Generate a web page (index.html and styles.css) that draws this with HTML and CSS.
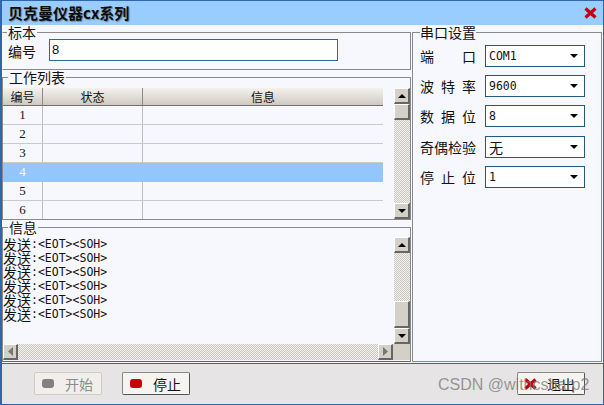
FILE: index.html
```html
<!DOCTYPE html>
<html lang="zh">
<head>
<meta charset="utf-8">
<title>贝克曼仪器cx系列</title>
<link rel="stylesheet" href="styles.css">
</head>
<body>
<div class="window">
  <header class="titlebar">
    <span class="title">贝克曼仪器cx系列</span>
    <svg class="close" width="13" height="12" viewBox="0 0 13 12"><path d="M1.5 1.5 L11.5 10.5 M11.5 1.5 L1.5 10.5" stroke="#c4000c" stroke-width="3.2" fill="none"/></svg>
  </header>
  <main class="main">
    <div class="left">
      <fieldset class="group sample">
        <legend>标本</legend>
        <div class="sample-row">
          <label class="sample-label">编号</label>
          <div class="textbox">8</div>
        </div>
      </fieldset>
      <fieldset class="group worklist">
        <legend>工作列表</legend>
        <div class="list-row">
          <table class="grid">
            <colgroup><col class="c1"><col class="c2"><col class="c3"></colgroup>
            <thead><tr><th>编号</th><th>状态</th><th>信息</th></tr></thead>
            <tbody>
              <tr><td>1</td><td></td><td></td></tr>
              <tr><td>2</td><td></td><td></td></tr>
              <tr><td>3</td><td></td><td></td></tr>
              <tr class="selected"><td>4</td><td></td><td></td></tr>
              <tr><td>5</td><td></td><td></td></tr>
              <tr><td>6</td><td></td><td></td></tr>
            </tbody>
          </table>
          <div class="vscroll list-scroll">
            <div class="sbtn"><svg width="8" height="4" viewBox="0 0 8 4"><path d="M4 0 L8 4 L0 4 Z"/></svg></div>
            <div class="thumb thumb-list"></div>
            <div class="track"></div>
            <div class="sbtn"><svg width="8" height="4" viewBox="0 0 8 4"><path d="M0 0 L8 0 L4 4 Z"/></svg></div>
          </div>
        </div>
      </fieldset>
      <fieldset class="group info">
        <legend>信息</legend>
        <div class="info-body">
          <div class="log">
            <div class="log-line"><span class="cn">发送</span><span class="mono">:&lt;EOT&gt;&lt;SOH&gt;</span></div>
            <div class="log-line"><span class="cn">发送</span><span class="mono">:&lt;EOT&gt;&lt;SOH&gt;</span></div>
            <div class="log-line"><span class="cn">发送</span><span class="mono">:&lt;EOT&gt;&lt;SOH&gt;</span></div>
            <div class="log-line"><span class="cn">发送</span><span class="mono">:&lt;EOT&gt;&lt;SOH&gt;</span></div>
            <div class="log-line"><span class="cn">发送</span><span class="mono">:&lt;EOT&gt;&lt;SOH&gt;</span></div>
            <div class="log-line"><span class="cn">发送</span><span class="mono">:&lt;EOT&gt;&lt;SOH&gt;</span></div>
          </div>
          <div class="vscroll info-scroll">
            <div class="sbtn"><svg width="8" height="4" viewBox="0 0 8 4"><path d="M4 0 L8 4 L0 4 Z"/></svg></div>
            <div class="track"></div>
            <div class="thumb thumb-info"></div>
            <div class="sbtn"><svg width="8" height="4" viewBox="0 0 8 4"><path d="M0 0 L8 0 L4 4 Z"/></svg></div>
          </div>
        </div>
        <div class="hscroll">
          <div class="sbtn hbtn"><svg width="5" height="9" viewBox="0 0 5 9"><path d="M5 0 L5 9 L0 4.5 Z" fill="#777"/></svg></div>
          <div class="track"></div>
          <div class="sbtn hbtn"><svg width="5" height="9" viewBox="0 0 5 9"><path d="M0 0 L0 9 L5 4.5 Z" fill="#777"/></svg></div>
          <div class="corner"></div>
        </div>
      </fieldset>
    </div>
    <fieldset class="group serial">
      <legend>串口设置</legend>
      <div class="fields">
        <div class="field"><span class="field-label">端口</span><div class="combo mono-text">COM1<svg width="8" height="4" viewBox="0 0 8 4"><path d="M0 0 L8 0 L4 4 Z"/></svg></div></div>
        <div class="field"><span class="field-label">波特率</span><div class="combo mono-text">9600<svg width="8" height="4" viewBox="0 0 8 4"><path d="M0 0 L8 0 L4 4 Z"/></svg></div></div>
        <div class="field"><span class="field-label">数据位</span><div class="combo mono-text">8<svg width="8" height="4" viewBox="0 0 8 4"><path d="M0 0 L8 0 L4 4 Z"/></svg></div></div>
        <div class="field field-shift"><span class="field-label">奇偶检验</span><div class="combo">无<svg width="8" height="4" viewBox="0 0 8 4"><path d="M0 0 L8 0 L4 4 Z"/></svg></div></div>
        <div class="field"><span class="field-label">停止位</span><div class="combo mono-text">1<svg width="8" height="4" viewBox="0 0 8 4"><path d="M0 0 L8 0 L4 4 Z"/></svg></div></div>
      </div>
    </fieldset>
  </main>
  <footer class="footer">
    <div class="btn btn-start is-disabled"><span class="led led-grey"></span>开始</div>
    <div class="btn btn-stop"><span class="led led-red"></span>停止</div>
    <div class="btn btn-exit"><svg class="exit-x" width="13" height="12" viewBox="0 0 13 12"><path d="M1.5 1.5 L11.5 10.5 M11.5 1.5 L1.5 10.5" stroke="#c4000c" stroke-width="3.2" fill="none"/></svg>退出</div>
    <span class="watermark">CSDN @withcsharp2</span>
  </footer>
</div>
</body>
</html>
```
FILE: styles.css
```css
* { box-sizing: border-box; }
html, body { margin: 0; padding: 0; }
body {
  width: 604px;
  height: 405px;
  overflow: hidden;
  font-family: "Noto Sans CJK SC", "Noto Sans", sans-serif;
  font-size: 14px;
  color: #111;
}
.window {
  width: 604px;
  height: 405px;
  display: flex;
  flex-direction: column;
  background: #f7f8fe;
  border-left: 2px solid #2f66ac;
  border-right: 1px solid #2f66ac;
  border-top: 1px solid #2f66ac;
  border-bottom: 1px solid #2f66ac;
  position: relative;
}
.titlebar {
  height: 24px;
  flex: none;
  background: #99ccff;
  display: flex;
  align-items: center;
  justify-content: space-between;
  padding: 0 6px;
}
.title {
  font-size: 15px;
  line-height: 20px;
  font-weight: 700;
  color: #0c0c0c;
  text-shadow: 1px 1px 1px #6d7f92;
}
.close { display: block; margin-top: -1px; }
.main {
  flex: none;
  height: 337px;
  display: flex;
  gap: 1px;
}
.left { width: 409px; flex: none; display: flex; flex-direction: column; }
.group {
  margin: 0;
  padding: 0;
  min-width: 0;
  border: 1px solid #8a8a8a;
}
.group legend {
  margin-left: 5px;
  padding: 0 1px;
  font-size: 14px;
  line-height: 14px;
  height: 14px;
}
.sample { height: 45px; border-left-color: transparent; }
.sample legend { margin-left: 4px; }
.sample-row { display: flex; align-items: flex-start; }
.sample-label { margin: 4px 0 0 5px; width: 41px; line-height: 16px; }
.textbox {
  width: 289px;
  height: 22px;
  background: #fff;
  border: 1px solid #2a6a96;
  padding-left: 2px;
  line-height: 20px;
  font-family: "Liberation Sans", sans-serif;
  font-size: 13px;
}
.worklist { height: 150px; }
.list-row { display: flex; justify-content: space-between; padding-top: 4px; }
.grid {
  width: 380px;
  table-layout: fixed;
  border-collapse: separate;
  border-spacing: 0;
  font-size: 12px;
}
.c1 { width: 40px; }
.c2 { width: 100px; }
.c3 { width: 240px; }
.grid th {
  height: 18px;
  padding: 0;
  font-weight: 400;
  line-height: 14px;
  background: linear-gradient(#f4f2ee, #cfc9c2);
  border-bottom: 1px solid #6e6e6e;
  border-right: 1px solid #8a8a8a;
}
.grid th:last-child { border-right: none; }
.grid td {
  height: 19px;
  padding: 0;
  text-align: center;
  line-height: 14px;
  border-bottom: 1px solid #cacaca;
  border-right: 1px solid #bdbdbd;
  font-family: "Liberation Serif", serif;
  font-size: 13px;
}
.grid td:last-child { border-right: none; }
.grid tbody tr:last-child td { height: 18px; border-bottom: none; }
.grid .selected td {
  background: #94c6fb;
  border-color: #94c6fb;
  color: #fff;
}
.vscroll { width: 16px; flex: none; display: flex; flex-direction: column; }
.list-scroll { height: 131px; }
.info-scroll { height: 107px; margin-top: 3px; }
.sbtn {
  flex: none;
  height: 16px;
  background: #d4d0c8;
  border-top: 1px solid #fff;
  border-left: 1px solid #fff;
  border-right: 2px solid #666;
  border-bottom: 2px solid #666;
  display: flex;
  align-items: center;
  justify-content: center;
}
.sbtn svg { display: block; }
.thumb {
  flex: none;
  background: #d4d0c8;
  border-top: 1px solid #fff;
  border-left: 1px solid #fff;
  border-right: 2px solid #666;
  border-bottom: 2px solid #666;
}
.thumb-list { height: 16px; }
.thumb-info { height: 27px; }
.track {
  flex: 1;
  background: repeating-conic-gradient(#c9c6bf 0 25%, #f4f3f0 0 50%) 0 0 / 2px 2px;
}
.info { height: 142px; border-bottom-color: #4f6a80; }
.info-body { display: flex; justify-content: space-between; height: 110px; }
.log { padding-top: 3px; white-space: nowrap; }
.log-line { height: 14px; display: flex; align-items: center; }
.cn { font-size: 14px; line-height: 14px; }
.mono { font-family: "DejaVu Sans Mono", monospace; font-size: 11.5px; line-height: 14px; }
.hscroll { display: flex; height: 16px; }
.hbtn { width: 15px; }
.corner { width: 17px; flex: none; background: #d4d0c8; }
.serial { width: 190px; height: 337px; flex: none; border-color: #8a8a8a; }
.serial legend { margin-left: 7px; padding: 0; }
.fields { display: flex; flex-direction: column; gap: 8px; padding: 6px 0 0 7px; }
.field { display: flex; align-items: center; height: 22px; gap: 9px; }
.field-shift { margin-top: 1px; }
.field-label {
  width: 56px;
  flex: none;
  white-space: nowrap;
  text-align: justify;
  text-align-last: justify;
  line-height: 16px;
}
.combo {
  width: 100px;
  height: 22px;
  background: #fff;
  border: 1px solid #24597f;
  display: flex;
  align-items: center;
  justify-content: space-between;
  padding: 0 6px 0 3px;
  line-height: 20px;
}
.mono-text { font-family: "DejaVu Sans Mono", monospace; font-size: 11.5px; }
.footer {
  flex: 1;
  display: flex;
  align-items: flex-start;
  margin-top: 1px;
  padding-top: 8px;
  padding-left: 32px;
  background: #e6e4e4;
  border-top: 1px solid #2f66ac;
  position: relative;
}
.btn {
  width: 68px;
  height: 23px;
  display: flex;
  align-items: center;
  padding-left: 7px;
  gap: 11px;
  background: #f6f4f0;
  border: 1px solid #555;
  border-top-color: #888;
  border-left-color: #888;
  border-radius: 2px;
  line-height: 16px;
}
.is-disabled { border-color: #cfcbc6; color: #8c8c8c; background: #f1efec; }
.btn-stop { margin-left: 20px; }
.btn-exit { margin-left: auto; margin-right: 18px; padding-left: 6px; gap: 10px; }
.led { display: block; width: 12px; height: 9px; border-radius: 3px; }
.led-grey { background: #808080; }
.led-red { background: #c80008; }
.exit-x { display: block; }
.watermark {
  position: absolute;
  left: 436px;
  top: 11px;
  font-family: "Liberation Sans", sans-serif;
  font-size: 16px;
  line-height: 20px;
  color: rgba(120, 120, 120, 0.75);
  white-space: nowrap;
}
```
